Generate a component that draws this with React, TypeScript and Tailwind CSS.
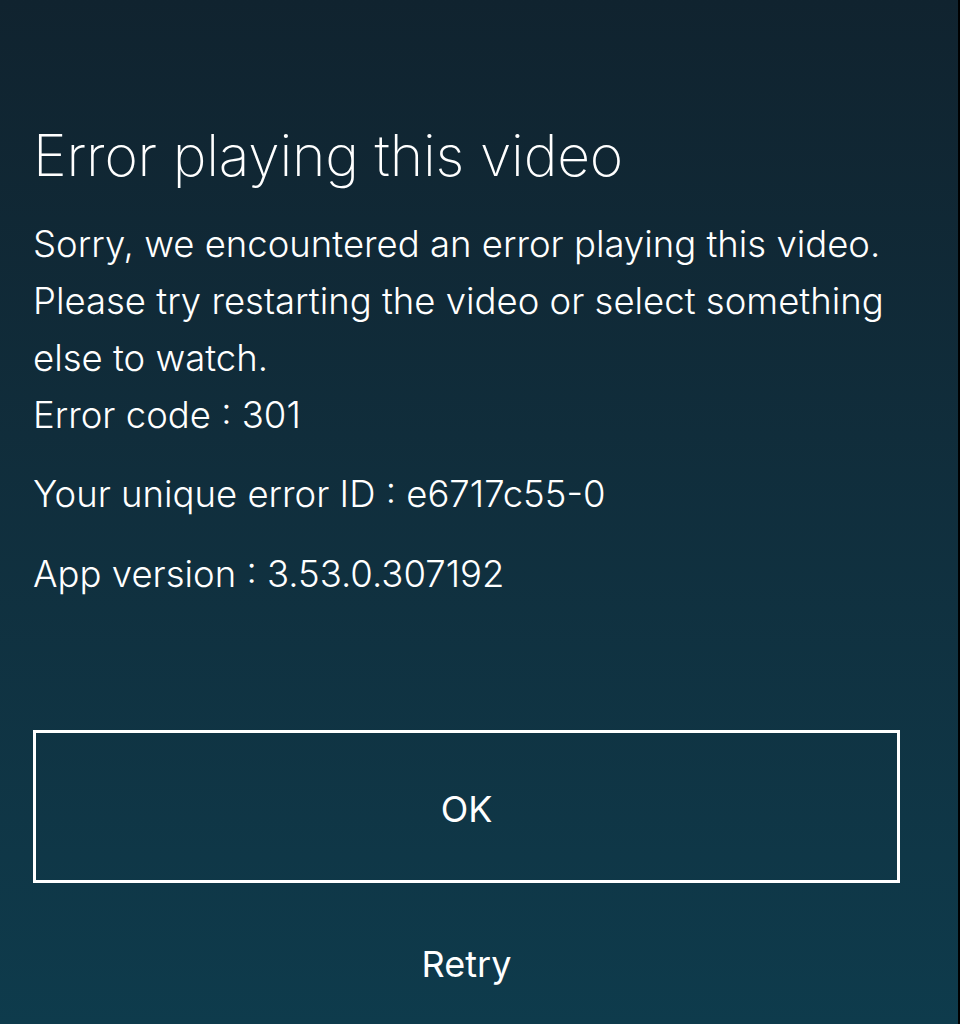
export default function App() {
  return (
    <div className="flex h-[1024px] w-[960px] overflow-hidden bg-black">
      <div
        className="flex h-full w-[958px] flex-col bg-gradient-to-b from-[#10232f] to-[#0e3b4c] pl-[33px] pt-[120px] text-white"
        style={{ fontFamily: "Inter, 'Noto Sans', sans-serif" }}
      >
        <div className="w-[867px]">
          <h1 className="text-[57px] font-extralight leading-[72px] tracking-[-0.2px]">
            Error playing this video
          </h1>
          <div className="mt-[24px] text-[36.5px] font-light leading-[57px]">
            <p>
              Sorry, we encountered an error playing this video. Please try restarting the video or
              select something else to watch.
            </p>
            <p>Error code : 301</p>
            <p className="mt-[22px]">Your unique error ID : e6717c55-0</p>
            <p className="mt-[23px]">App version : 3.53.0.307192</p>
          </div>
          <button className="mt-[127px] flex h-[153px] w-full items-center justify-center border-[3px] border-white pt-[4px] text-[36px] font-normal">
            OK
          </button>
          <button className="mt-[54px] flex w-full justify-center text-[36px] font-normal">
            Retry
          </button>
        </div>
      </div>
    </div>
  );
}
